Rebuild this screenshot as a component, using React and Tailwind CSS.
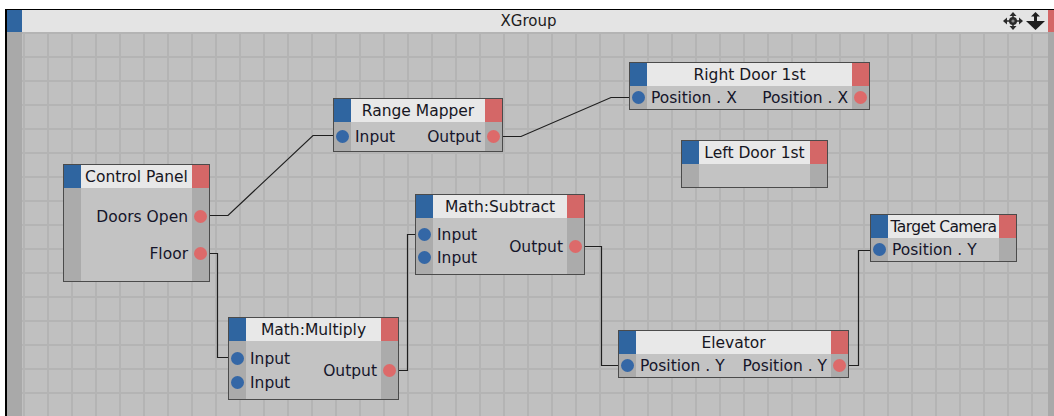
import React from 'react';

const nodes = [
  { title: 'Control Panel', pos: 'left-[41px] top-[132px] w-[147px]', body: 'h-[93px]', gap: 'gap-[14px]', inputs: [], outputs: ['Doors Open', 'Floor'] },
  { title: 'Range Mapper', pos: 'left-[311px] top-[66px] w-[170px]', body: 'h-[29px]', gap: 'gap-0', inputs: ['Input'], outputs: ['Output'] },
  { title: 'Right Door 1st', pos: 'left-[607px] top-[30px] w-[241px]', body: 'h-[23px]', gap: 'gap-0', inputs: ['Position . X'], outputs: ['Position . X'] },
  { title: 'Left Door 1st', pos: 'left-[659px] top-[108px] w-[147px]', body: 'h-[23px]', gap: 'gap-0', inputs: [], outputs: [] },
  { title: 'Math:Subtract', pos: 'left-[393px] top-[162px] w-[170px]', body: 'h-[56px]', gap: 'gap-0', inputs: ['Input', 'Input'], outputs: ['Output'] },
  { title: 'Math:Multiply', pos: 'left-[206px] top-[285px] w-[171px]', body: 'h-[58px]', gap: 'gap-[1px]', inputs: ['Input', 'Input'], outputs: ['Output'] },
  { title: 'Elevator', pos: 'left-[596px] top-[298px] w-[231px]', body: 'h-[23px]', gap: 'gap-0', inputs: ['Position . Y'], outputs: ['Position . Y'] },
  { title: 'Target Camera', pos: 'left-[848px] top-[182px] w-[147px]', body: 'h-[23px]', gap: 'gap-0', inputs: ['Position . Y'], outputs: [], tight: true },
];

const wires = [
  'M187 183.5 H206 L291 103.5 H311',
  'M480 104.5 H499 L589 65.5 H607',
  'M187 221.5 H195.5 V325.5 H206',
  'M376 338.5 H385.5 V202.5 H393',
  'M562 214.5 H579.5 V333.5 H596',
  'M826 333.5 H836.5 V218.5 H848',
];

function Port({ color }) {
  return (
    <div className="h-[23px] flex items-center">
      <span className={`block w-[13px] h-[13px] rounded-full ${color}`} />
    </div>
  );
}

function Node({ node }) {
  return (
    <div className={`absolute flex flex-col border border-[#4b4b4b] ${node.pos}`}>
      <div className="flex h-[23px]">
        <div className="w-[17px] bg-[#2f65a0]" />
        <div
          className={`flex-1 min-w-0 overflow-hidden whitespace-nowrap bg-[#e8e8e8] px-[1px] pt-[1px] text-center text-[15.5px] leading-[22px] text-[#161622] ${node.tight ? 'tracking-[-0.6px]' : ''}`}
        >
          {node.title}
        </div>
        <div className="w-[17px] bg-[#d46767]" />
      </div>
      <div className={`flex ${node.body}`}>
        <div className={`w-[17px] bg-[#ababab] flex flex-col items-center justify-center ${node.gap}`}>
          {node.inputs.map((_, i) => <Port key={i} color="bg-[#3467a6]" />)}
        </div>
        <div className="flex-1 flex justify-between bg-[#c3c3c3] px-1 text-[15.5px] text-[#15152a]">
          <div className={`flex flex-col justify-center ${node.gap}`}>
            {node.inputs.map((t, i) => (
              <div key={i} className="h-[23px] pt-[1px] leading-[22px] whitespace-nowrap">{t}</div>
            ))}
          </div>
          <div className={`flex flex-col items-end justify-center ${node.gap}`}>
            {node.outputs.map((t, i) => (
              <div key={i} className="h-[23px] pt-[1px] leading-[22px] whitespace-nowrap">{t}</div>
            ))}
          </div>
        </div>
        <div className={`w-[17px] bg-[#ababab] flex flex-col items-center justify-center ${node.gap}`}>
          {node.outputs.map((_, i) => <Port key={i} color="bg-[#dd6a6a]" />)}
        </div>
      </div>
    </div>
  );
}

function MoveIcon() {
  return (
    <svg width="20" height="18" viewBox="0 0 20 18">
      <polygon points="10,0 6.5,4 13.5,4" fill="#2a2a2a" />
      <polygon points="10,18 6.5,14 13.5,14" fill="#2a2a2a" />
      <polygon points="0,9 4,5.5 4,12.5" fill="#2a2a2a" />
      <polygon points="20,9 16,5.5 16,12.5" fill="#2a2a2a" />
      <path d="M10 4 V14 M4 9 H16" stroke="#2a2a2a" strokeWidth="1.5" />
      <circle cx="10" cy="9" r="4" fill="#2a2a2a" />
      <circle cx="10" cy="9" r="1.6" fill="#8a8a8a" />
    </svg>
  );
}

function DropIcon() {
  return (
    <svg width="19" height="18" viewBox="0 0 19 18">
      <polygon points="9.5,0 5,4.5 14,4.5" fill="#1e1e1e" />
      <rect x="8" y="4" width="3" height="6" fill="#1e1e1e" />
      <polygon points="0,9 19,9 9.5,18" fill="#1e1e1e" />
    </svg>
  );
}

export default function App() {
  return (
    <div className="w-[1054px] h-[416px] overflow-hidden bg-white font-['DejaVu_Sans',sans-serif]">
      <div className="ml-[5px] mt-[9px] border-t border-l-2 border-black">
        <div className="flex h-[22px] bg-[#e4e4e4]">
          <div className="w-[15px] bg-[#2f65a0]" />
          <div className="flex-1 pl-[32px] text-center text-[15px] leading-[22px] text-[#1c1c1c]">XGroup</div>
          <div className="flex items-center gap-[3px] pr-[3px]">
            <MoveIcon />
            <DropIcon />
          </div>
          <div className="w-[6px] bg-[#d46767]" />
        </div>
        <div className="flex h-[384px]">
          <div className="w-[15px] bg-[#a9a9a9]" />
          <div className="relative flex-1 overflow-hidden bg-[#c0c0c0] bg-[linear-gradient(to_right,#b4b4b4_2px,transparent_2px),linear-gradient(to_bottom,#b4b4b4_2px,transparent_2px)] bg-[size:24px_24px] bg-[position:1px_0px]">
            <svg className="absolute inset-0 w-full h-full" fill="none">
              {wires.map((d, i) => (
                <path key={i} d={d} stroke="#1f1f1f" strokeWidth="1.2" />
              ))}
            </svg>
            {nodes.map((n) => <Node key={n.title} node={n} />)}
          </div>
          <div className="w-[6px] bg-[#a9a9a9]" />
        </div>
      </div>
    </div>
  );
}
